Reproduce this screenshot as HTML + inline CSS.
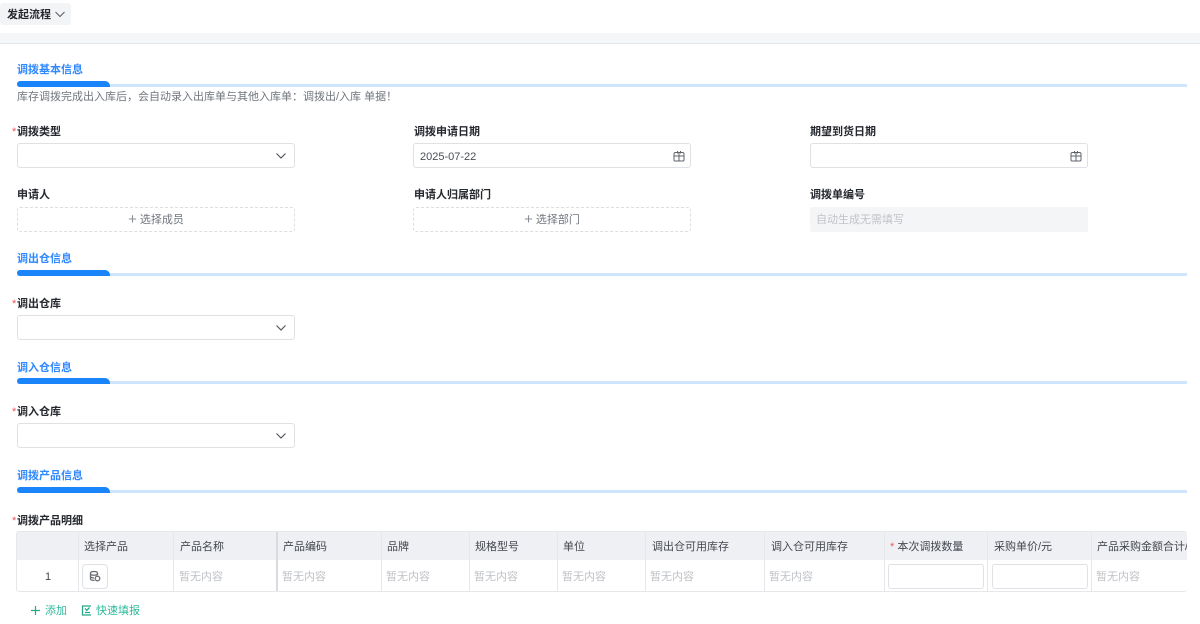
<!DOCTYPE html>
<html lang="zh"><head><meta charset="utf-8"><style>
html,body{margin:0;padding:0;background:#fff}
body{width:1200px;height:624px;position:relative;overflow:hidden;font-family:"Liberation Sans","Noto Sans CJK SC",sans-serif;font-size:11px;color:#1f2329}
#w{position:absolute;left:0;top:0;width:1200px;height:624px;filter:blur(.35px)}
.a{position:absolute;white-space:nowrap;line-height:16px}
.sec{color:#2f88ff;font-weight:700}
.lb{font-weight:700;color:#25282e}
.st{color:#f0555a}
.line{position:absolute;left:17px;width:1170px;height:3px;background:#cfe5fd}
.th{position:absolute;left:17px;width:93px;height:6px;background:#1a84fb;border-radius:3px 5px 0 3px}
.box{position:absolute;box-sizing:border-box;width:278px;height:25px;border:1px solid #dfe1e5;border-radius:3px;background:#fff}
.dash{position:absolute;box-sizing:border-box;width:278px;height:25px;border:1px dashed #dcdee2;border-radius:3px;color:#70757d;text-align:center;line-height:23px}
.dash b{font-weight:400;font-size:15px;color:#8a8f96;margin-right:3px;vertical-align:-1px}
svg{position:absolute;fill:none}
.v{position:absolute;top:532px;width:1px;height:59px;background:#e5e7ea}
.h{color:#43474e;top:539px}
.e{color:#bfc2c7;top:569px}
.ip{position:absolute;box-sizing:border-box;top:564px;width:96px;height:25px;border:1px solid #dfe1e5;border-radius:3px;background:#fff}
</style></head><body><div id="w">
<div style="position:absolute;left:0;top:3px;width:71px;height:22px;background:#f3f4f6;border-radius:3px"></div>
<div class="a" style="left:7px;top:7px;font-weight:700;color:#25282e">发起流程</div>
<svg style="left:54px;top:10px" width="12" height="8"><path d="M1.500 2 6 6.500 10.500 2" stroke="#555a62" stroke-width="1"/></svg>
<div style="position:absolute;left:0;top:33px;width:1200px;height:10px;background:#f5f6f8;border-bottom:1px solid #e3e5e8"></div>

<div class="a sec" style="left:17px;top:62px">调拨基本信息</div>
<div class="line" style="top:84px"></div><div class="th" style="top:81px"></div>
<div class="a" style="left:17px;top:89px;color:#70757d">库存调拨完成出入库后，会自动录入出库单与其他入库单：调拨出/入库 单据！</div>

<div class="a lb" style="left:17px;top:124px"><span class="st" style="position:absolute;left:-5px;font-weight:400">*</span>调拨类型</div>
<div class="box" style="left:17px;top:143px"></div>
<svg style="left:275px;top:152px" width="12" height="8"><path d="M1.500 1.500 6 6 10.500 1.500" stroke="#555a62" stroke-width="1.200"/></svg>

<div class="a lb" style="left:414px;top:124px">调拨申请日期</div>
<div class="box" style="left:413px;top:143px"></div>
<div class="a" style="left:420px;top:149px;color:#4a4e55">2025-07-22</div>
<svg style="left:673px;top:150px" width="12" height="12"><path d="M2.500 2.500h7q1.500 0 1.500 1.500v6q0 1-1 1H2q-1 0-1-1V4q0-1.500 1.500-1.500zM1 6h10M4.500 1v2.500M7.500 1v2.500M6 2.500V11" stroke="#5f646b" stroke-width="1"/></svg>

<div class="a lb" style="left:810px;top:124px">期望到货日期</div>
<div class="box" style="left:810px;top:143px"></div>
<svg style="left:1070px;top:150px" width="12" height="12"><path d="M2.500 2.500h7q1.500 0 1.500 1.500v6q0 1-1 1H2q-1 0-1-1V4q0-1.500 1.500-1.500zM1 6h10M4.500 1v2.500M7.500 1v2.500M6 2.500V11" stroke="#5f646b" stroke-width="1"/></svg>

<div class="a lb" style="left:17px;top:187px">申请人</div>
<div class="dash" style="left:17px;top:207px"><b>+</b>选择成员</div>
<div class="a lb" style="left:414px;top:187px">申请人归属部门</div>
<div class="dash" style="left:413px;top:207px"><b>+</b>选择部门</div>
<div class="a lb" style="left:810px;top:187px">调拨单编号</div>
<div style="position:absolute;left:810px;top:207px;width:278px;height:25px;background:#f4f5f7;border-radius:2px"></div>
<div class="a" style="left:816px;top:212px;color:#bfc2c7">自动生成无需填写</div>

<div class="a sec" style="left:17px;top:251px">调出仓信息</div>
<div class="line" style="top:273px"></div><div class="th" style="top:270px"></div>
<div class="a lb" style="left:17px;top:296px"><span class="st" style="position:absolute;left:-5px;font-weight:400">*</span>调出仓库</div>
<div class="box" style="left:17px;top:315px"></div>
<svg style="left:275px;top:324px" width="12" height="8"><path d="M1.500 1.500 6 6 10.500 1.500" stroke="#555a62" stroke-width="1.200"/></svg>

<div class="a sec" style="left:17px;top:360px">调入仓信息</div>
<div class="line" style="top:381px"></div><div class="th" style="top:378px"></div>
<div class="a lb" style="left:17px;top:404px"><span class="st" style="position:absolute;left:-5px;font-weight:400">*</span>调入仓库</div>
<div class="box" style="left:17px;top:423px"></div>
<svg style="left:275px;top:432px" width="12" height="8"><path d="M1.500 1.500 6 6 10.500 1.500" stroke="#555a62" stroke-width="1.200"/></svg>

<div class="a sec" style="left:17px;top:468px">调拨产品信息</div>
<div class="line" style="top:490px"></div><div class="th" style="top:487px"></div>
<div class="a lb" style="left:17px;top:513px"><span class="st" style="position:absolute;left:-5px;font-weight:400">*</span>调拨产品明细</div>

<div style="position:absolute;left:16px;top:531px;width:1171px;height:61px;box-sizing:border-box;border:1px solid #e5e7ea;border-right:0;border-radius:3px;overflow:hidden"><div style="height:28px;background:#eff0f4"></div></div>
<div class="v" style="left:78px"></div><div class="v" style="left:173px"></div><div class="v" style="left:276px;width:2px;background:#d9dbdf"></div><div class="v" style="left:381px"></div><div class="v" style="left:469px"></div><div class="v" style="left:557px"></div><div class="v" style="left:645px"></div><div class="v" style="left:764px"></div><div class="v" style="left:884px"></div><div class="v" style="left:987px"></div><div class="v" style="left:1091px"></div>

<div class="a h" style="left:84px">选择产品</div>
<div class="a h" style="left:180px">产品名称</div>
<div class="a h" style="left:283px">产品编码</div>
<div class="a h" style="left:387px">品牌</div>
<div class="a h" style="left:475px">规格型号</div>
<div class="a h" style="left:563px">单位</div>
<div class="a h" style="left:652px">调出仓可用库存</div>
<div class="a h" style="left:771px">调入仓可用库存</div>
<div class="a h" style="left:890px"><span class="st">*</span>&nbsp;本次调拨数量</div>
<div class="a h" style="left:994px">采购单价/元</div>
<div style="position:absolute;left:1097px;top:539px;width:90px;height:16px;overflow:hidden;white-space:nowrap;line-height:16px;color:#43474e">产品采购金额合计/元</div>

<div class="a" style="left:45px;top:569px;color:#43474e">1</div>
<div style="position:absolute;box-sizing:border-box;left:82px;top:564px;width:26px;height:25px;border:1px solid #dfe1e5;border-radius:4px;background:#fff"></div>
<svg style="left:89px;top:570px" width="12" height="12"><path d="M1.500 9.500V3.500Q1.500 1.500 5 1.500T8.500 3.500V5M1.500 4.500Q5 6 8.500 4.500M1.500 7Q3 8 5 8M1.500 9.500Q3 10.500 5.500 10.500" stroke="#6a6f76" stroke-width="1.300"/><circle cx="8.500" cy="8.500" r="2.300" stroke="#6a6f76" stroke-width="1.300"/></svg>
<div class="a e" style="left:179px">暂无内容</div>
<div class="a e" style="left:282px">暂无内容</div>
<div class="a e" style="left:386px">暂无内容</div>
<div class="a e" style="left:474px">暂无内容</div>
<div class="a e" style="left:562px">暂无内容</div>
<div class="a e" style="left:650px">暂无内容</div>
<div class="a e" style="left:769px">暂无内容</div>
<div class="ip" style="left:888px"></div>
<div class="ip" style="left:992px"></div>
<div class="a e" style="left:1096px">暂无内容</div>

<svg style="left:30px;top:605px" width="11" height="11"><path d="M5.500 1v9M1 5.500h9" stroke="#26a88a" stroke-width="1.200"/></svg>
<div class="a" style="left:45px;top:603px;color:#2dba9b">添加</div>
<svg style="left:81px;top:605px" width="11" height="11"><path d="M10 1H1.500v9H10M4 3.500l1.800 1.800L8.500 2.500M4 7.500h5" stroke="#26a88a" stroke-width="1.300"/></svg>
<div class="a" style="left:96px;top:603px;color:#2dba9b">快速填报</div>
</div></body></html>
